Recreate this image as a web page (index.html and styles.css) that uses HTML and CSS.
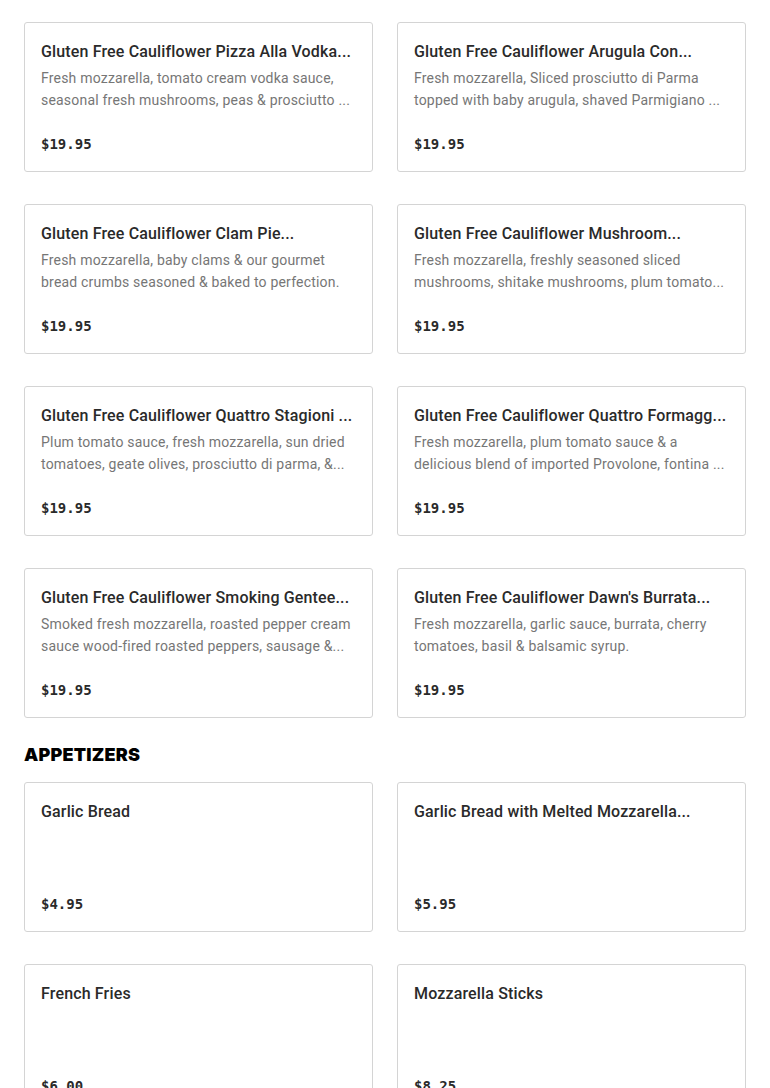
FILE: index.html
```html
<!DOCTYPE html>
<html lang="en">
<head>
<meta charset="utf-8">
<title>Menu</title>
<link rel="stylesheet" href="styles.css">
</head>
<body>
<main class="menu">
  <section class="section">
    <div class="grid">
      <article class="card"><h3 class="card-title">Gluten Free Cauliflower Pizza Alla Vodka...</h3><p class="card-desc">Fresh mozzarella, tomato cream vodka sauce, seasonal fresh mushrooms, peas &amp; prosciutto ...</p><div class="card-price">$19.95</div></article>
      <article class="card"><h3 class="card-title">Gluten Free Cauliflower Arugula Con...</h3><p class="card-desc">Fresh mozzarella, Sliced prosciutto di Parma topped with baby arugula, shaved Parmigiano ...</p><div class="card-price">$19.95</div></article>
      <article class="card"><h3 class="card-title">Gluten Free Cauliflower Clam Pie...</h3><p class="card-desc">Fresh mozzarella, baby clams &amp; our gourmet bread crumbs seasoned &amp; baked to perfection.</p><div class="card-price">$19.95</div></article>
      <article class="card"><h3 class="card-title">Gluten Free Cauliflower Mushroom...</h3><p class="card-desc">Fresh mozzarella, freshly seasoned sliced mushrooms, shitake mushrooms, plum tomato...</p><div class="card-price">$19.95</div></article>
      <article class="card"><h3 class="card-title">Gluten Free Cauliflower Quattro Stagioni ...</h3><p class="card-desc">Plum tomato sauce, fresh mozzarella, sun dried tomatoes, geate olives, prosciutto di parma, &amp;...</p><div class="card-price">$19.95</div></article>
      <article class="card"><h3 class="card-title">Gluten Free Cauliflower Quattro Formagg...</h3><p class="card-desc">Fresh mozzarella, plum tomato sauce &amp; a delicious blend of imported Provolone, fontina ...</p><div class="card-price">$19.95</div></article>
      <article class="card"><h3 class="card-title">Gluten Free Cauliflower Smoking Gentee...</h3><p class="card-desc">Smoked fresh mozzarella, roasted pepper cream sauce wood-fired roasted peppers, sausage &amp;...</p><div class="card-price">$19.95</div></article>
      <article class="card"><h3 class="card-title">Gluten Free Cauliflower Dawn's Burrata...</h3><p class="card-desc">Fresh mozzarella, garlic sauce, burrata, cherry tomatoes, basil &amp; balsamic syrup.</p><div class="card-price">$19.95</div></article>
    </div>
  </section>
  <section class="section">
    <h2 class="section-title">APPETIZERS</h2>
    <div class="grid">
      <article class="card"><h3 class="card-title">Garlic Bread</h3><div class="card-price">$4.95</div></article>
      <article class="card"><h3 class="card-title">Garlic Bread with Melted Mozzarella...</h3><div class="card-price">$5.95</div></article>
      <article class="card"><h3 class="card-title">French Fries</h3><div class="card-price">$6.00</div></article>
      <article class="card"><h3 class="card-title">Mozzarella Sticks</h3><div class="card-price">$8.25</div></article>
    </div>
  </section>
</main>
</body>
</html>
```
FILE: styles.css
```css
* { box-sizing: border-box; }
html, body { margin: 0; padding: 0; background: #fff; }
body { font-family: Roboto, "Noto Sans", "Liberation Sans", sans-serif; color: #2a2a2a; }
.menu { padding: 22px 24px 0; }
.section-title {
  margin: 24px 0 14px;
  font-family: Inter, "Liberation Sans", sans-serif;
  font-size: 18px;
  line-height: 26px;
  font-weight: 900;
  color: #000;
  letter-spacing: 0.2px;
}
.grid {
  display: grid;
  grid-template-columns: 1fr 1fr;
  column-gap: 24px;
  row-gap: 32px;
}
.card {
  height: 150px;
  border: 1px solid #d4d4d4;
  border-radius: 3px;
  padding: 17px 16px 16px;
  display: flex;
  flex-direction: column;
  min-width: 0;
}
.card-title {
  margin: 0;
  font-size: 16px;
  line-height: 24px;
  font-weight: 500;
  letter-spacing: 0.15px;
  color: #2a2a2a;
  white-space: nowrap;
  overflow: hidden;
  text-overflow: ellipsis;
}
.card-desc {
  margin: 3px 0 0;
  font-size: 14px;
  line-height: 22px;
  letter-spacing: 0.2px;
  color: #767676;
}
.card-price {
  margin-top: auto;
  font-family: "DejaVu Sans Mono", "Liberation Mono", monospace;
  font-size: 14px;
  line-height: 22px;
  font-weight: 700;
  color: #2a2a2a;
}
```
